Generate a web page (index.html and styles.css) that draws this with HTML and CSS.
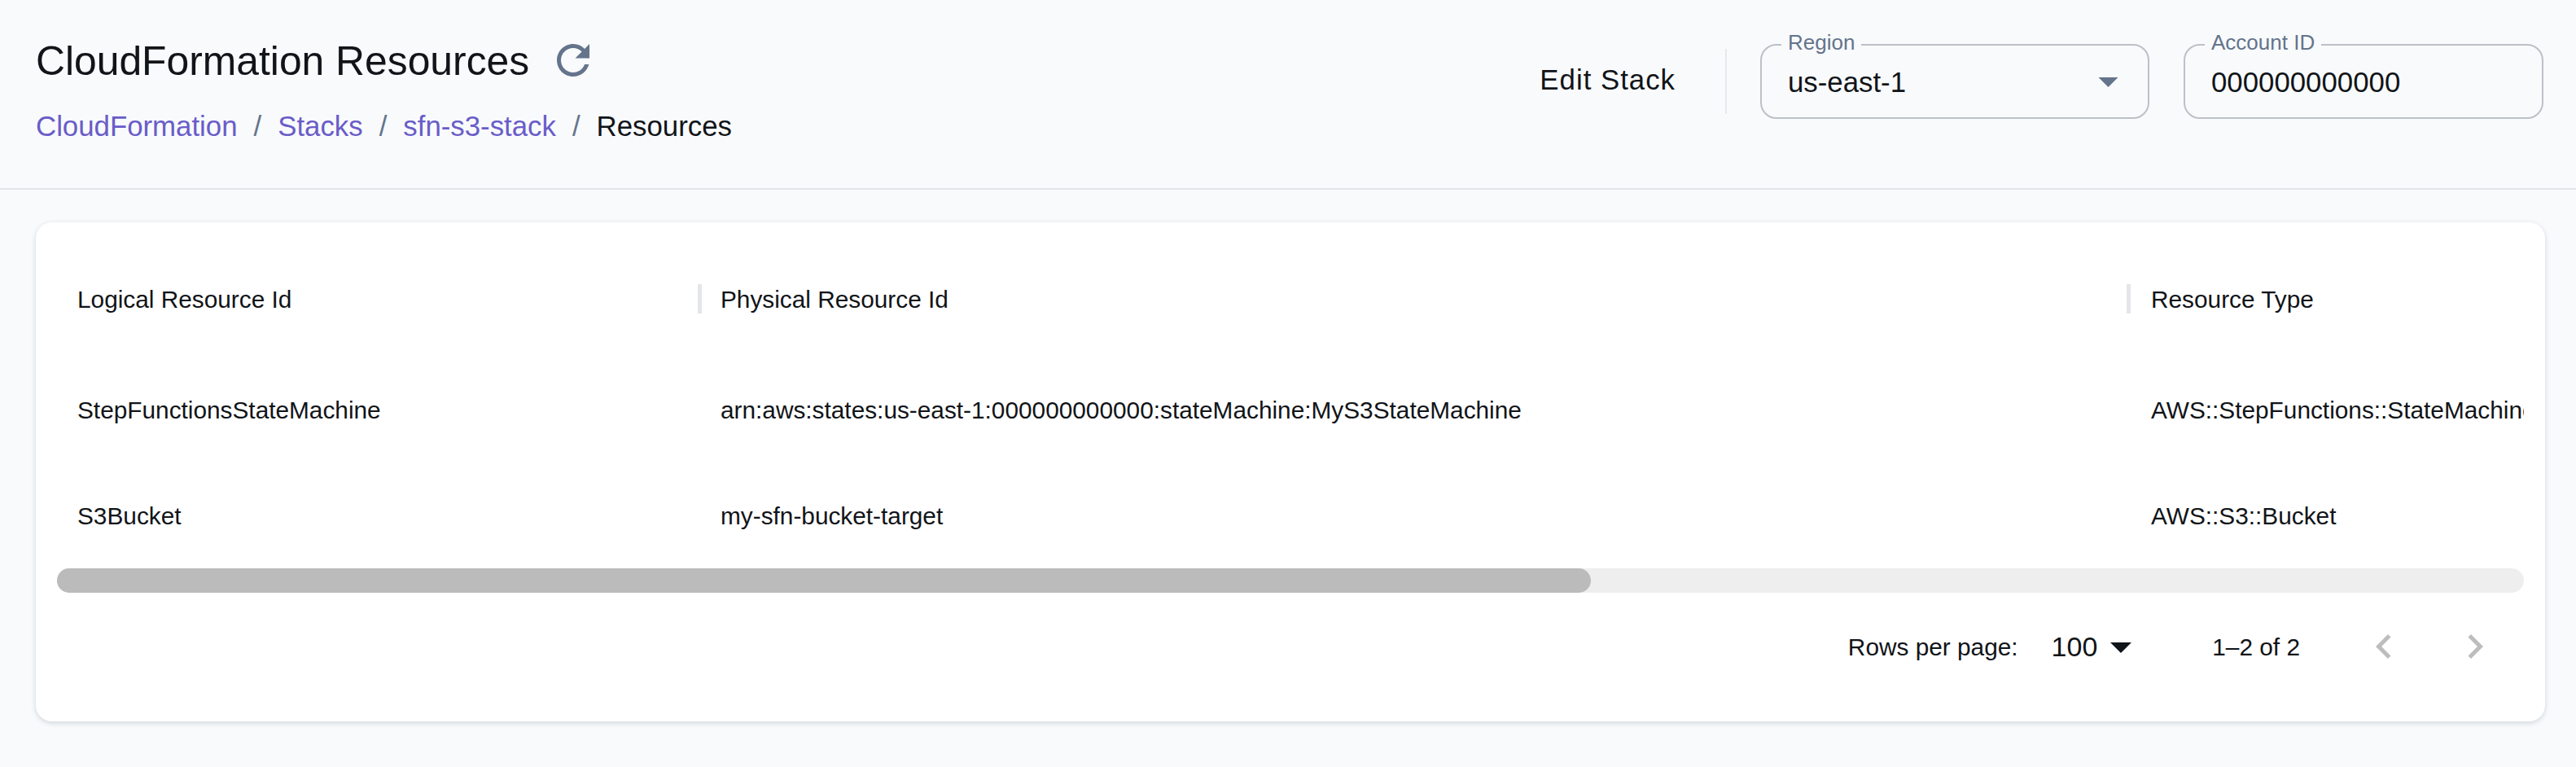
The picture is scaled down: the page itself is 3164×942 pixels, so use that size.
FILE: index.html
```html
<!DOCTYPE html>
<html lang="en">
<head>
    <meta charset="UTF-8">
    <title>CloudFormation Resources</title>
    <link rel="stylesheet" href="styles.css">
</head>
<body>
    <header class="page-header">
        <div class="header-left">
            <div class="title-row">
                <h1>CloudFormation Resources</h1>
                <svg class="refresh-icon" viewBox="0 0 24 24"><path d="M17.65 6.35C16.2 4.9 14.21 4 12 4c-4.42 0-7.99 3.58-7.99 8s3.57 8 7.99 8c3.73 0 6.84-2.55 7.73-6h-2.08c-.82 2.33-3.04 4-5.65 4-3.31 0-6-2.69-6-6s2.69-6 6-6c1.66 0 3.14.69 4.22 1.78L13 11h7V4l-2.35 2.35z"/></svg>
            </div>
            <nav class="breadcrumbs">
                <a href="#">CloudFormation</a>
                <span class="crumb-sep">/</span>
                <a href="#">Stacks</a>
                <span class="crumb-sep">/</span>
                <a href="#">sfn-s3-stack</a>
                <span class="crumb-sep">/</span>
                <span class="crumb-current">Resources</span>
            </nav>
        </div>
        <div class="header-right">
            <button class="edit-btn" type="button">Edit Stack</button>
            <div class="divider"></div>
            <fieldset class="field field-region">
                <legend><span>Region</span></legend>
                <div class="field-value">
                    <span>us-east-1</span>
                    <svg class="field-caret" viewBox="7 10 10 5"><path d="M7 10l5 5 5-5z"/></svg>
                </div>
            </fieldset>
            <fieldset class="field field-account">
                <legend><span>Account ID</span></legend>
                <div class="field-value">
                    <span>000000000000</span>
                </div>
            </fieldset>
        </div>
    </header>

    <main class="content">
        <section class="card">
            <div class="table-clip">
                <div class="table-row table-head">
                    <div class="cell cell-logical">Logical Resource Id</div>
                    <div class="cell cell-physical">Physical Resource Id</div>
                    <div class="cell cell-type">Resource Type</div>
                </div>
                <div class="table-row">
                    <div class="cell cell-logical">StepFunctionsStateMachine</div>
                    <div class="cell cell-physical">arn:aws:states:us-east-1:000000000000:stateMachine:MyS3StateMachine</div>
                    <div class="cell cell-type">AWS::StepFunctions::StateMachine</div>
                </div>
                <div class="table-row">
                    <div class="cell cell-logical">S3Bucket</div>
                    <div class="cell cell-physical">my-sfn-bucket-target</div>
                    <div class="cell cell-type">AWS::S3::Bucket</div>
                </div>
            </div>
            <div class="scroll-track"><div class="scroll-thumb"></div></div>
            <div class="pagination">
                <span class="rows-label">Rows per page:</span>
                <span class="rows-value">100</span>
                <svg class="rows-caret" viewBox="7 10 10 5"><path d="M7 10l5 5 5-5z"/></svg>
                <span class="page-range">1–2 of 2</span>
                <svg class="page-arrow page-prev" viewBox="0 0 24 24"><path d="M15.41 7.41 14 6l-6 6 6 6 1.41-1.41L10.83 12z"/></svg>
                <svg class="page-arrow page-next" viewBox="0 0 24 24"><path d="M10 6 8.59 7.41 13.17 12l-4.58 4.59L10 18l6-6z"/></svg>
            </div>
        </section>
    </main>
</body>
</html>
```

FILE: styles.css
```css
* {
    box-sizing: border-box;
}

body {
    margin: 0;
    min-height: 942px;
    background-color: #f8fafc;
    color: #111418;
    font-family: "Liberation Sans", Arial, sans-serif;
}

.page-header {
    display: flex;
    justify-content: space-between;
    align-items: flex-start;
    height: 233px;
    padding: 0 40px 0 44px;
    border-bottom: 2px solid #e2e5e9;
}

.title-row {
    display: flex;
    align-items: center;
    margin-top: 45px;
    height: 60px;
}

h1 {
    margin: 0;
    font-size: 49.8px;
    font-weight: 400;
    line-height: 60px;
}

.refresh-icon {
    width: 60px;
    height: 60px;
    margin-left: 24px;
    margin-top: -2px;
    fill: #64748b;
}

.breadcrumbs {
    display: flex;
    align-items: center;
    margin-top: 26px;
    font-size: 34.8px;
    line-height: 48px;
}

.breadcrumbs a {
    color: #6a5cc8;
    text-decoration: none;
}

.crumb-sep {
    margin: 0 20px;
    color: #64748b;
}

.header-right {
    display: flex;
    align-items: flex-start;
    padding-top: 41px;
}

.edit-btn {
    height: 80px;
    margin-top: 17px;
    padding: 0;
    border: none;
    background: none;
    color: #111418;
    font-family: inherit;
    font-size: 34.8px;
    letter-spacing: 1px;
}

.divider {
    width: 2px;
    height: 80px;
    margin: 19px 41px 0 61px;
    background-color: #e6e9ed;
}

.field {
    height: 105px;
    margin: 0;
    padding: 0 32px;
    border: 2px solid #bcc1c7;
    border-radius: 20px;
}

.field-region {
    width: 478px;
}

.field-account {
    width: 442px;
    margin-left: 42px;
}

.field legend {
    padding: 0 8px;
    margin-left: -8px;
    color: #64748b;
    font-size: 26px;
    line-height: 28px;
}

/* label sits a little above the notch */
.field legend span {
    position: relative;
    top: -3px;
}

.field-value {
    display: flex;
    justify-content: space-between;
    align-items: center;
    height: 64px;
    font-size: 34.8px;
    line-height: 64px;
}

.field-caret {
    width: 25px;
    height: 12px;
    margin-right: 4px;
    fill: #64748b;
}

.content {
    padding: 40px 38px 0 44px;
}

.card {
    height: 613px;
    padding: 23px 26px 0;
    border-radius: 20px;
    background-color: #fff;
    box-shadow: 0 2px 6px rgba(60, 70, 85, 0.2);
}

.table-clip {
    overflow: hidden;
}

.table-row {
    display: flex;
    height: 130px;
    font-size: 29.8px;
    line-height: 32px;
}

.table-head {
    height: 142px;
}

.table-row .cell {
    display: flex;
    flex-shrink: 0;
    align-items: center;
    padding-top: 2px;
    white-space: nowrap;
}

.cell-logical {
    width: 787px;
    padding-left: 25px;
}

.cell-physical {
    width: 1755px;
    padding-left: 28px;
}

.cell-type {
    width: 1000px;
    padding-left: 30px;
}

.table-head .cell-physical,
.table-head .cell-type {
    position: relative;
}

.table-head .cell-physical::before,
.table-head .cell-type::before {
    content: "";
    position: absolute;
    left: 0;
    top: 53px;
    width: 5px;
    height: 36px;
    background-color: #e4e6e9;
}

.scroll-track {
    height: 30px;
    border-radius: 15px;
    background-color: #eeeeee;
}

.scroll-thumb {
    width: 1884px;
    height: 30px;
    border-radius: 15px;
    background-color: #bbbbbb;
}

.pagination {
    display: flex;
    justify-content: flex-end;
    align-items: center;
    height: 134px;
    font-size: 29.8px;
}

.rows-value {
    margin-left: 41px;
    margin-top: -2px;
    font-size: 34px;
}

.rows-caret {
    width: 26px;
    height: 13px;
    margin-left: 16px;
    fill: #111418;
}

.page-range {
    margin-left: 99px;
}

.page-arrow {
    width: 60px;
    height: 60px;
    margin-top: -2px;
    fill: #bdbdbd;
}

.page-prev {
    margin-left: 73px;
}

.page-next {
    margin-left: 52px;
    margin-right: 30px;
}
```
